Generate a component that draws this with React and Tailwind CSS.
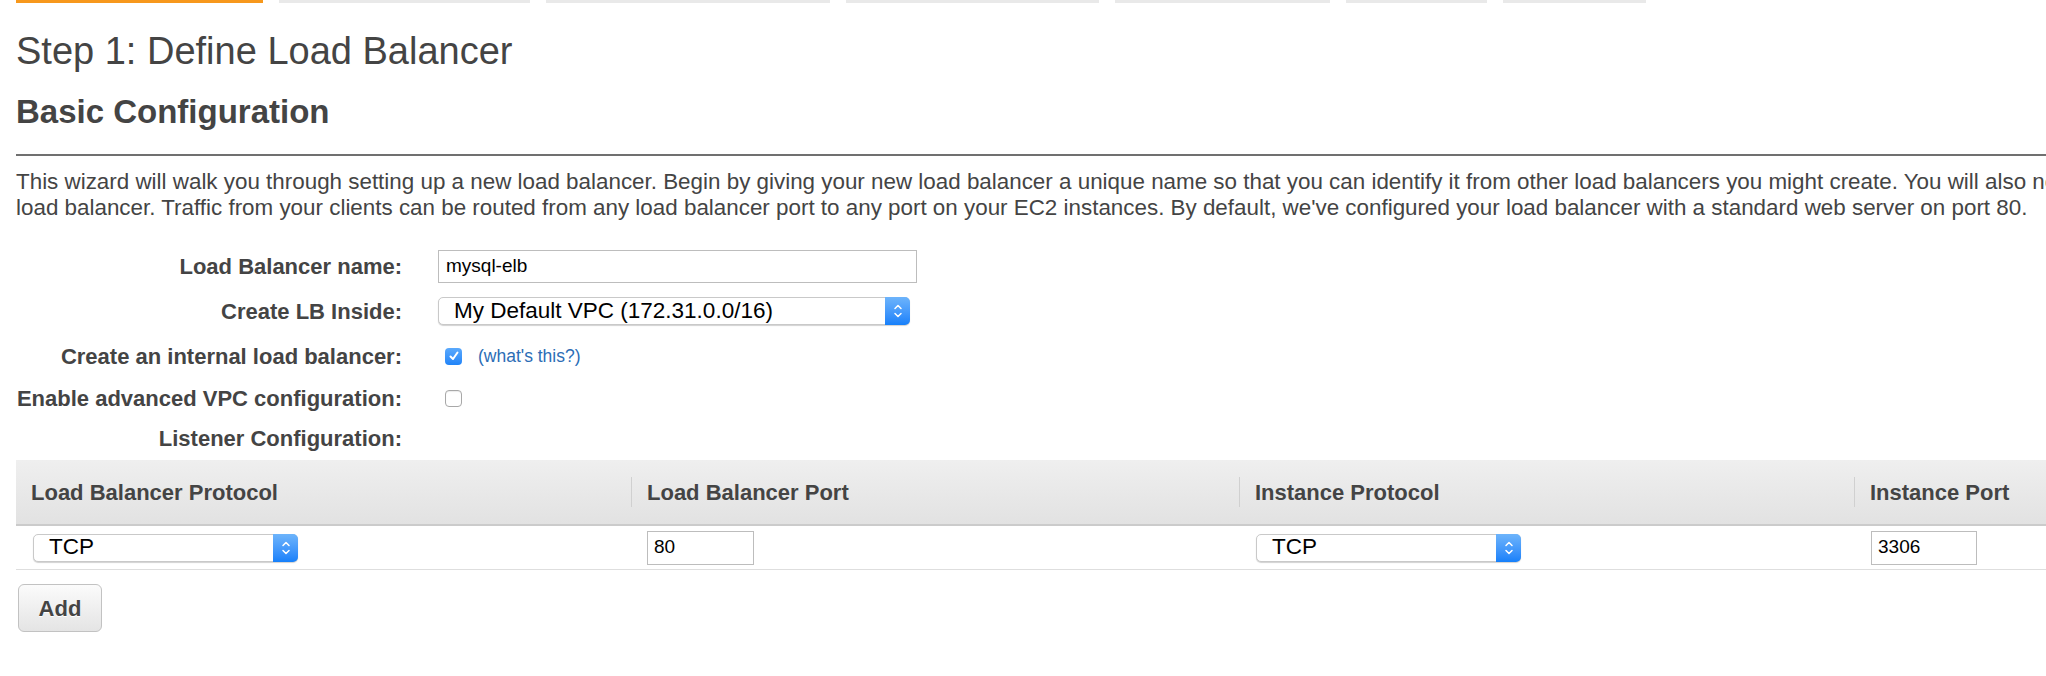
import React from "react"

const tabs = [
    { w: "w-[247px]", active: true },
    { w: "w-[251px]" },
    { w: "w-[284px]" },
    { w: "w-[253px]" },
    { w: "w-[215px]" },
    { w: "w-[141px]" },
    { w: "w-[143px]" },
]

// Mac style select with the blue stepper on the right
const Select = ({ value, width }) => (
    <div className={`flex h-[28px] ${width} items-center rounded-[5px] border border-[#c9c9c9] bg-white shadow-[0_1px_1px_rgba(0,0,0,0.18)]`}>
        <span className="pl-[15px] text-[22.5px] leading-none text-black">{value}</span>
        <div className="ml-auto flex h-[28px] w-[25px] -mr-px items-center justify-center rounded-r-[5px] bg-linear-to-b from-[#6db4fb] to-[#1580fa]">
            <svg width="10" height="18" viewBox="0 0 10 18" fill="none">
                <path d="M2 6.5 L5 3.5 L8 6.5" stroke="white" strokeWidth="1.5" strokeLinecap="round" strokeLinejoin="round" />
                <path d="M2 11.5 L5 14.5 L8 11.5" stroke="white" strokeWidth="1.5" strokeLinecap="round" strokeLinejoin="round" />
            </svg>
        </div>
    </div>
)

const TextInput = ({ value, width }) => (
    <div className={`flex h-[34px] ${width} items-center border border-[#bdbdbd] bg-white pl-[6px] text-[19px] text-black`}>
        {value}
    </div>
)

const Checkbox = ({ checked }) =>
    checked ? (
        <div className="flex h-[17px] w-[17px] items-center justify-center rounded-[4px] bg-linear-to-b from-[#5aa9fc] to-[#1f84f8]">
            <svg width="12" height="12" viewBox="0 0 12 12" fill="none">
                <path d="M2.5 6.5 L5 9 L9.5 2.5" stroke="white" strokeWidth="2" strokeLinecap="round" strokeLinejoin="round" />
            </svg>
        </div>
    ) : (
        <div className="h-[17px] w-[17px] rounded-[4px] border border-[#a8a8a8] bg-white shadow-[inset_0_1px_1px_rgba(0,0,0,0.08)]" />
    )

const FormRow = ({ label, height, children }) => (
    <div className={`flex ${height} items-center`}>
        <div className="w-[402px] text-right text-[22px] font-bold">{label}</div>
        <div className="ml-[36px] flex items-center">{children}</div>
    </div>
)

const columns = [
    { title: "Load Balancer Protocol", w: "w-[615px]", first: true },
    { title: "Load Balancer Port", w: "w-[608px]" },
    { title: "Instance Protocol", w: "w-[615px]" },
    { title: "Instance Port", w: "w-[615px]" },
]

export default function App() {
    return (
        <div className="h-[676px] w-[2046px] overflow-hidden bg-white font-['Liberation_Sans',Arial,sans-serif] text-[#444]">
            {/* Wizard steps */}
            <div className="flex gap-[16px] pl-[16px]">
                {tabs.map((t, i) => (
                    <div key={i} className={`h-[3px] ${t.w} ${t.active ? "bg-[#f7981c]" : "bg-[#e9e9e9]"}`} />
                ))}
            </div>

            <h1 className="ml-[16px] mt-[29px] text-[38px] leading-[38px] font-normal">Step 1: Define Load Balancer</h1>
            <h2 className="ml-[16px] mt-[25px] text-[33px] leading-[33px] font-bold">Basic Configuration</h2>
            <div className="ml-[16px] mt-[26px] h-[2px] bg-[#707070]" />

            <div className="ml-[16px] mt-[13px] text-[22.4px] leading-[26px] whitespace-nowrap">
                <div>
                    This wizard will walk you through setting up a new load balancer. Begin by giving your new load balancer a unique name so that you can identify it from other load balancers you might create. You will also need to configure ports and protocols for your
                </div>
                <div>
                    load balancer. Traffic from your clients can be routed from any load balancer port to any port on your EC2 instances. By default, we've configured your load balancer with a standard web server on port 80.
                </div>
            </div>

            {/* Basic settings */}
            <div className="mt-[23px]">
                <FormRow label="Load Balancer name:" height="h-[44px]">
                    <div className="flex h-[33px] w-[479px] items-center border border-[#bdbdbd] bg-white pl-[7px] text-[19px] text-black">
                        mysql-elb
                    </div>
                </FormRow>
                <FormRow label="Create LB Inside:" height="h-[46px]">
                    <Select value="My Default VPC (172.31.0.0/16)" width="w-[472px]" />
                </FormRow>
                <FormRow label="Create an internal load balancer:" height="h-[44px]">
                    <div className="ml-[7px] flex items-center gap-[16px]">
                        <Checkbox checked />
                        <span className="text-[17.5px] text-[#2b6db6]">(what's this?)</span>
                    </div>
                </FormRow>
                <FormRow label="Enable advanced VPC configuration:" height="h-[40px]">
                    <div className="ml-[7px]">
                        <Checkbox />
                    </div>
                </FormRow>
                <FormRow label="Listener Configuration:" height="h-[40px]" />
            </div>

            {/* Listeners table */}
            <div className="ml-[16px] mt-[2px] w-[2453px]">
                <div className="flex h-[66px] border-b-2 border-[#cbcbcb] bg-linear-to-b from-[#efefef] to-[#e2e2e2]">
                    {columns.map((c) => (
                        <div key={c.title} className={`flex ${c.w} items-center`}>
                            <div className={`flex h-[30px] items-center text-[22px] font-bold ${c.first ? "pl-[15px]" : "border-l border-[#d0d0d0] pl-[15px]"}`}>
                                {c.title}
                            </div>
                        </div>
                    ))}
                </div>
                <div className="flex h-[44px] items-center border-b border-[#dedede]">
                    <div className="w-[615px] pl-[17px]">
                        <Select value="TCP" width="w-[265px]" />
                    </div>
                    <div className="w-[608px] pl-[16px]">
                        <TextInput value="80" width="w-[107px]" />
                    </div>
                    <div className="w-[615px] pl-[17px]">
                        <Select value="TCP" width="w-[265px]" />
                    </div>
                    <div className="w-[615px] pl-[17px]">
                        <TextInput value="3306" width="w-[106px]" />
                    </div>
                </div>
            </div>

            <button className="ml-[18px] mt-[14px] flex h-[48px] w-[84px] items-center justify-center rounded-[6px] border border-[#c2c2c2] bg-linear-to-b from-[#fbfbfb] to-[#e4e4e4] text-[22px] font-bold text-[#444] [text-shadow:0_1px_0_#fff]">
                Add
            </button>
        </div>
    )
}
